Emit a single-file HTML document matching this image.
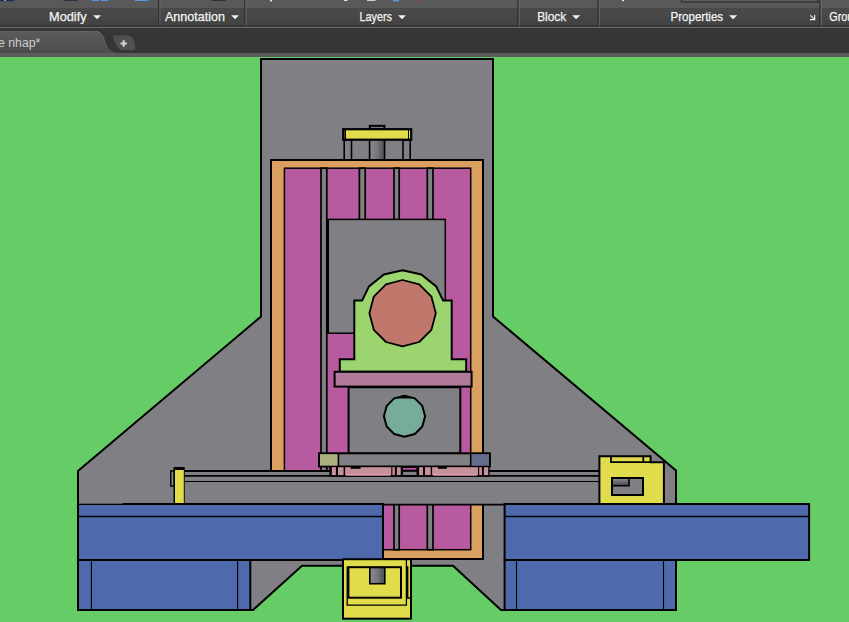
<!DOCTYPE html>
<html><head><meta charset="utf-8"><title>AutoCAD</title>
<style>
html,body{margin:0;padding:0;background:#66cc66;}
body{width:849px;height:622px;overflow:hidden;position:relative;font-family:"Liberation Sans",sans-serif;}
#rib{position:absolute;left:0;top:0;width:849px;height:57px;background:#363636;}
#rib .top{position:absolute;left:0;top:0;width:849px;height:8px;background:#595959;}
#rib .ttl{position:absolute;left:0;top:8px;width:849px;height:18px;background:linear-gradient(#4c4c4c,#424242);}
#rib .l1{position:absolute;left:0;top:26px;width:849px;height:1px;background:#2b2b2b;}
#rib .l2{position:absolute;left:0;top:27px;width:849px;height:1px;background:#6e6e6e;}
#rib .bot{position:absolute;left:0;top:53px;width:849px;height:4px;background:#5b5b5b;}
.sep{position:absolute;top:0;width:1px;height:26px;background:#3a3a3a;box-shadow:1px 0 0 #666;}
.lab{position:absolute;top:9px;height:16px;line-height:16px;font-size:12.5px;color:#f0f0f0;white-space:nowrap;}
.tri{position:absolute;top:15px;width:0;height:0;border-left:4px solid transparent;border-right:4px solid transparent;border-top:4px solid #f0f0f0;}
.ic{position:absolute;top:0;height:1px;}
#dwg{position:absolute;left:0;top:0;}
</style></head><body>
<svg id="dwg" width="849" height="622" viewBox="0 0 849 622">
<defs>
<linearGradient id="cyl" x1="0" x2="1" y1="0" y2="0"><stop offset="0" stop-color="#8a8a8e"/><stop offset="0.5" stop-color="#77777c"/><stop offset="1" stop-color="#4a4a55"/></linearGradient>
<linearGradient id="cylv" x1="0" x2="0" y1="0" y2="1"><stop offset="0" stop-color="#8a8a8e"/><stop offset="1" stop-color="#4a4a55"/></linearGradient>
</defs>
<rect x="0" y="57" width="849" height="565" fill="#66cc66"/>
<g stroke="#000" stroke-width="2" stroke-linejoin="miter">
<!-- body -->
<polygon points="261,59 493,59 493,316.5 676,470.5 676,610 501,610 453,565.7 302,565.7 253,610 78,610 78,471 261,316.5" fill="#807f83"/>
<!-- orange frame -->
<rect x="271" y="160" width="212" height="399" fill="#dba060"/>
<rect x="284.4" y="168.2" width="186.3" height="381.5" fill="#b85aa0" stroke-width="1.5"/>
</g>
<!-- vertical bars -->
<g fill="#807f83" stroke="#000" stroke-width="1.7">
<rect x="321" y="168.2" width="5.8" height="381.5"/>
<rect x="359.4" y="168.2" width="5.8" height="381.5"/>
<rect x="394" y="168.2" width="5.2" height="381.5"/>
<rect x="427.3" y="168.2" width="5.7" height="381.5"/>
</g>
<!-- upper gray box -->
<rect x="328.3" y="219.4" width="117" height="113.8" fill="#807f83" stroke="#000" stroke-width="1.5"/>
<line x1="327.6" y1="219" x2="327.6" y2="333" stroke="#000" stroke-width="2.6"/>
<!-- bracket -->
<path d="M339.8,371.8 L339.8,359.2 L354.3,359.2 L354.3,300.6 L362.1,300.6 L369.0,286.4 L383.9,274.5 L402.6,270.2 L421.3,274.5 L436.2,286.4 L443.1,300.6 L451.7,300.6 L451.7,359.2 L466.2,359.2 L466.2,371.8 Z" fill="#9cd470" stroke="#000" stroke-width="2"/>
<polygon points="402.6,280.0 386.0,284.4 373.8,296.6 369.4,313.2 373.8,329.8 386.0,342.0 402.6,346.4 419.2,342.0 431.4,329.8 435.8,313.2 431.4,296.6 419.2,284.4" fill="#c0786c" stroke="#000" stroke-width="1.8" stroke-linejoin="round"/>
<!-- lower gray box -->
<rect x="348.6" y="386.5" width="111.7" height="67" fill="#807f83" stroke="#000" stroke-width="2"/>
<!-- purple bar -->
<rect x="334.6" y="371.8" width="137" height="14.8" fill="#b07a98" stroke="#000" stroke-width="2"/>
<line x1="348" y1="387.3" x2="461" y2="387.3" stroke="#000" stroke-width="2"/>
<polygon points="404.5,395.6 394.2,398.4 386.7,405.9 383.9,416.2 386.7,426.5 394.2,434.0 404.5,436.8 414.8,434.0 422.3,426.5 425.1,416.2 422.3,405.9 414.8,398.4" fill="#78ac9a" stroke="#000" stroke-width="2" stroke-linejoin="round"/>
<polygon points="394.3,398.4 404.5,395.6 414.7,398.4" fill="#000"/>
<!-- bottom plate -->
<rect x="319" y="453.3" width="170.9" height="13.2" fill="#807f83" stroke="#000" stroke-width="2"/>
<rect x="320" y="454.3" width="18" height="11.2" fill="#acb07e"/>
<rect x="471" y="454.3" width="17.9" height="11.2" fill="#636c8c"/>
<line x1="338.4" y1="453.3" x2="338.4" y2="466.5" stroke="#000" stroke-width="1.5"/>
<line x1="470.7" y1="453.3" x2="470.7" y2="466.5" stroke="#000" stroke-width="1.5"/>

<rect x="184" y="470.8" width="415" height="33.2" fill="#807f83"/>
<!-- rail -->
<g stroke="#000" fill="none">
<line x1="184" y1="471" x2="330" y2="471" stroke-width="1.8"/>
<line x1="489" y1="471" x2="599" y2="471" stroke-width="1.8"/>
<line x1="184" y1="475.9" x2="599" y2="475.9" stroke-width="1.8"/>
<line x1="184" y1="481.5" x2="599" y2="481.5" stroke-width="1.2"/>
<line x1="383" y1="504.6" x2="505" y2="504.6" stroke-width="1.6"/>
</g>
<!-- pink pieces -->
<rect x="329.4" y="466" width="160.2" height="10.8" fill="#000"/>
<g fill="#c6919b">
<rect x="331.8" y="467.2" width="4.1" height="7.9"/>
<rect x="338.0" y="467.2" width="5.6" height="7.9"/>
<rect x="345.1" y="467.2" width="46.2" height="7.9"/>
<rect x="392.4" y="467.2" width="2.4" height="7.9"/>
<rect x="396.9" y="467.2" width="3.8" height="7.9"/>
<rect x="419.1" y="467.2" width="3.9" height="7.9"/>
<rect x="425.0" y="467.2" width="5.7" height="7.9"/>
<rect x="432.1" y="467.2" width="45.9" height="7.9"/>
<rect x="479.2" y="467.2" width="2.7" height="7.9"/>
<rect x="483.9" y="467.2" width="4.3" height="7.9"/>
</g>
<rect x="346" y="474" width="44.3" height="1.7" fill="#dc9cae"/>
<rect x="433" y="474" width="44" height="1.7" fill="#dc9cae"/>
<rect x="350.6" y="467" width="10" height="1.8" fill="#000"/>
<rect x="438" y="467" width="8.8" height="1.8" fill="#000"/>
<rect x="403" y="468" width="13.5" height="1.7" fill="#c050a8"/>
<rect x="403" y="471.8" width="13.5" height="3.2" fill="#807f83"/>
<!-- left post -->
<rect x="170.8" y="471" width="3.5" height="15" fill="#8a8a90" stroke="#000" stroke-width="1.4"/>
<rect x="173.5" y="467" width="11.2" height="37" fill="#000"/>
<rect x="175" y="470" width="8.8" height="33" fill="#e0dc4c"/>
<!-- right yellow block -->
<path d="M599.4,456.2 L650.6,456.2 L650.6,462.2 L663.9,462.2 L663.9,504 L599.4,504 Z" fill="#e0dc4c" stroke="#000" stroke-width="2"/>
<path d="M611,456.2 L611,462.2 L651,462.2 M643.3,456.5 L643.3,462" fill="none" stroke="#000" stroke-width="1.8"/>
<rect x="612" y="478" width="31" height="17" fill="#807f83" stroke="#000" stroke-width="2"/>
<rect x="613" y="479" width="15.5" height="6" fill="url(#cylv)"/>
<path d="M613,485.8 L629,485.8 L629,479" fill="none" stroke="#000" stroke-width="1.6"/>
<!-- blue blocks -->
<g fill="#4e6aac" stroke="#000" stroke-width="2">
<rect x="78" y="560" width="172.3" height="50"/>
<rect x="78" y="504" width="305" height="56"/>
<rect x="504.6" y="560" width="171.4" height="50"/>
<rect x="504.6" y="504" width="304.5" height="56"/>
</g>
<g stroke="#000" stroke-width="1.5">
<line x1="78" y1="516.4" x2="383" y2="516.4"/>
<line x1="504.6" y1="516.4" x2="809" y2="516.4"/>
</g>
<rect x="79" y="502.6" width="43.7" height="1.1" fill="#807f83"/>
<g stroke="#000" stroke-width="1.1">
<line x1="91.4" y1="560" x2="91.4" y2="610"/>
<line x1="237.6" y1="560" x2="237.6" y2="610"/>
<line x1="516.5" y1="560" x2="516.5" y2="610"/>
<line x1="663.5" y1="560" x2="663.5" y2="610"/>
</g>

<!-- top yellow -->
<rect x="344.2" y="140" width="7.3" height="20" fill="#807f83" stroke="#000" stroke-width="1.6"/>
<rect x="403" y="140" width="7.2" height="20" fill="#807f83" stroke="#000" stroke-width="1.6"/>
<rect x="369.8" y="125.8" width="14.6" height="3.4" fill="#77777c" stroke="#000" stroke-width="2"/>
<rect x="369.6" y="139" width="15" height="21" fill="url(#cyl)" stroke="#000" stroke-width="1.6"/>
<rect x="343.2" y="129.2" width="68" height="10.5" fill="#e0dc4c" stroke="#000" stroke-width="2.2"/>
<line x1="345.2" y1="130" x2="345.2" y2="139" stroke="#000" stroke-width="1.6"/>
<line x1="408.5" y1="130" x2="408.5" y2="139" stroke="#000" stroke-width="1"/>
<line x1="342" y1="160" x2="412" y2="160" stroke="#000" stroke-width="2"/>
<!-- bottom yellow -->
<rect x="343" y="559.2" width="68" height="59.5" fill="#e0dc4c" stroke="#000" stroke-width="2"/>
<path d="M347.2,566.5 L347.2,605.2 L406.4,605.2 L406.4,559.5" fill="none" stroke="#000" stroke-width="1.3"/>
<rect x="348.4" y="567.2" width="52.6" height="30.5" fill="none" stroke="#000" stroke-width="2"/>
<path d="M407.6,566.2 L407.6,598 L411,598" fill="none" stroke="#000" stroke-width="1.6"/>
<rect x="369.8" y="567.5" width="15" height="16.2" fill="url(#cyl)" stroke="#000" stroke-width="1.6"/>

<!-- ribbon -->
<defs>
<linearGradient id="ttl" x1="0" x2="0" y1="0" y2="1"><stop offset="0" stop-color="#4b4b4b"/><stop offset="1" stop-color="#424242"/></linearGradient>
<linearGradient id="tabg" x1="0" x2="0" y1="0" y2="1"><stop offset="0" stop-color="#5c5c5c"/><stop offset="1" stop-color="#4b4b4b"/></linearGradient>
</defs>
<rect x="0" y="0" width="849" height="57" fill="#363636"/>
<rect x="0" y="0" width="849" height="8.2" fill="#595959"/>
<rect x="0" y="8.2" width="849" height="17.6" fill="url(#ttl)"/>
<rect x="0" y="25.6" width="849" height="1.2" fill="#2a2a2a"/>
<rect x="0" y="26.8" width="849" height="1.1" fill="#727272"/>
<rect x="0" y="53" width="849" height="4" fill="#5b5b5b"/>
<g>
<rect x="158.1" y="0" width="1.3" height="25.6" fill="#2c2c2c"/><rect x="159.4" y="0" width="1" height="25.6" fill="#686868"/>
<rect x="244.2" y="0" width="1.3" height="25.6" fill="#2c2c2c"/><rect x="245.5" y="0" width="1" height="25.6" fill="#686868"/>
<rect x="517.4" y="0" width="1.3" height="25.6" fill="#2c2c2c"/><rect x="518.7" y="0" width="1" height="25.6" fill="#686868"/>
<rect x="597.5" y="0" width="1.3" height="25.6" fill="#2c2c2c"/><rect x="598.8" y="0" width="1" height="25.6" fill="#686868"/>
<rect x="819.4" y="0" width="1.3" height="25.6" fill="#2c2c2c"/><rect x="820.7" y="0" width="1.3" height="25.6" fill="#686868"/>
</g>

<g>
<rect x="0" y="0" width="14" height="1.2" fill="#1c2b5c"/><rect x="4.5" y="0" width="1.3" height="1" fill="#ddd"/>
<rect x="63.5" y="0" width="14" height="1" fill="#2b3242"/>
<rect x="92" y="0" width="7" height="1" fill="#5a96e6"/><rect x="101" y="0" width="7" height="1" fill="#5a96e6"/>
<rect x="135" y="0" width="13.5" height="1" fill="#5a96e6"/>
<rect x="211.7" y="0" width="14" height="1" fill="#2b3242"/>
<rect x="270" y="0" width="2" height="1.4" fill="#e8e8e8"/>
<rect x="344" y="0" width="3.4" height="1" fill="#e8e8e8"/><rect x="367" y="0" width="8.5" height="1" fill="#d0d0d0"/>
<rect x="393" y="0" width="6.4" height="1.4" fill="#5a96e6"/><rect x="417" y="0" width="2.5" height="1.2" fill="#a0522d"/>
<rect x="622" y="0" width="2" height="1.2" fill="#e8e8e8"/>
<rect x="681.5" y="-5" width="136.5" height="7" fill="#5e5e5e" stroke="#2e2e2e" stroke-width="1.3"/>
</g>
<g font-family="'Liberation Sans',sans-serif" font-size="12.8" fill="#f4f4f4" stroke="#f4f4f4" stroke-width="0.25">
<text x="49.1" y="21.1" textLength="37.5" lengthAdjust="spacingAndGlyphs">Modify</text>
<text x="165" y="21.1" textLength="60" lengthAdjust="spacingAndGlyphs">Annotation</text>
<text x="359.5" y="21.1" textLength="32.5" lengthAdjust="spacingAndGlyphs">Layers</text>
<text x="537.2" y="21.1" textLength="29" lengthAdjust="spacingAndGlyphs">Block</text>
<text x="670.6" y="21.1" textLength="52.5" lengthAdjust="spacingAndGlyphs">Properties</text>
<text x="829.3" y="21.1" textLength="35.4" lengthAdjust="spacingAndGlyphs">Groups</text>
</g>
<g fill="#f2f2f2">
<polygon points="93.2,15.2 101,15.2 97.1,19.2"/>
<polygon points="231.2,15.2 239,15.2 235.1,19.2"/>
<polygon points="398,15.2 406,15.2 402,19.2"/>
<polygon points="572.2,15.2 580.1,15.2 576.1,19.2"/>
<polygon points="729,15.2 737.2,15.2 733.1,19.2"/>
</g>
<path d="M810.3,15.3 L814.4,19.3 M814.7,14.9 V19.55 H809.8" fill="none" stroke="#f4f4f4" stroke-width="1.15"/>
<!-- tab -->
<path d="M0,31.2 L97,31.2 C106,31.2 104,53 114,53 L0,53 Z" fill="url(#tabg)"/>
<path d="M0,31.5 L97,31.5 C106,31.5 104,53 114,53" fill="none" stroke="#6a6a6a" stroke-width="0.8"/>
<text x="-2" y="47" font-family="'Liberation Sans',sans-serif" font-size="12" fill="#cfcfcf" textLength="42.3" lengthAdjust="spacingAndGlyphs">e nhap*</text>
<path d="M112.5,35.5 L128,35.5 C133,35.5 135.2,41 135.2,50.1 L124,50.1 C117,50.1 115,42 112.5,35.5 Z" fill="#505050"/>
<path d="M123.7,40.3 V46.8 M120.5,43.5 H126.9" stroke="#d8d8d8" stroke-width="2" fill="none"/>
</svg>
</body></html>
